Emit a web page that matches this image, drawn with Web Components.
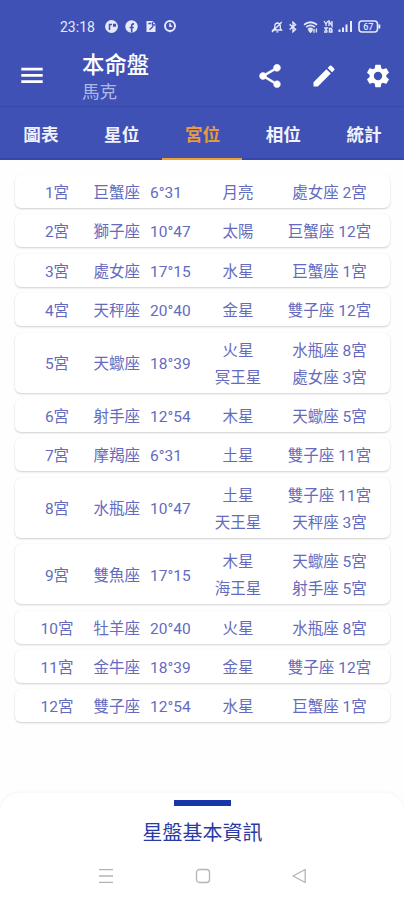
<!DOCTYPE html>
<html lang="zh-Hant">
<head>
<meta charset="utf-8">
<meta name="viewport" content="width=device-width">
<title>本命盤</title>
<style>
  body {
    margin: 0;
    background: #fefefe;
    font-family: Roboto, "Noto Sans CJK TC", sans-serif;
    color: #646bbe;
  }
</style>
</head>
<body>
<chart-screen>
  <status-bar slot="top" time="23:18"></status-bar>
  <app-header slot="top" heading="本命盤" subtitle="馬克"></app-header>
  <tab-bar slot="top">
    <tab-item>圖表</tab-item>
    <tab-item>星位</tab-item>
    <tab-item active>宮位</tab-item>
    <tab-item>相位</tab-item>
    <tab-item>統計</tab-item>
  </tab-bar>
  <house-list></house-list>
  <bottom-sheet slot="bottom">星盤基本資訊</bottom-sheet>
  <nav-bar slot="bottom"></nav-bar>
</chart-screen>

<script>
class BaseElement extends HTMLElement {
  constructor() {
    super();
    this.attachShadow({mode: 'open'});
  }

  connectedCallback() {
    const template = document.createElement('template');
    template.innerHTML = this.render();
    this.shadowRoot.replaceChildren(template.content);
  }
}

class ChartScreen extends BaseElement {
  render() {
    return `
    <style>
      :host {
        display: flex;
        flex-direction: column;
        width: 404px;
        height: 900px;
        overflow: hidden;
      }
      .top { background: #3f51b5; }
      main { flex: 1; min-height: 0; }
    </style>
    <div class="top"><slot name="top"></slot></div>
    <main><slot></slot></main>
    <div><slot name="bottom"></slot></div>`;
  }
}

class StatusBar extends BaseElement {
  render() {
    return `
    <style>
      :host {
        display: flex;
        align-items: center;
        height: 45px;
        padding: 8px 23px 0 60px;
        box-sizing: border-box;
        color: #e6e9fb;
      }
      .time { font-size: 14px; line-height: 16px; width: 45px; }
      svg { display: block; fill: none; stroke: currentColor; }
      .apps { display: flex; gap: 7px; }
      .system { display: flex; align-items: center; gap: 5px; margin-left: auto; }
      text { font: 500 9px Roboto, sans-serif; fill: currentColor; stroke: none; }
    </style>
    <span class="time">${this.getAttribute('time')}</span>
    <div class="apps">
      <svg width="13" height="13" viewBox="0 0 13 13"><circle cx="6.5" cy="6.5" r="6.4" fill="currentColor" stroke="none"/><path d="M4.5 10V4.6H7M8.7 4.6h1.6v1.5H8.7z" stroke="#3f51b5" stroke-width="1.5"/></svg>
      <svg width="13" height="13" viewBox="0 0 13 13"><circle cx="6.5" cy="6.5" r="6.2" fill="currentColor" stroke="none"/><path d="M6.7 12.5V5.7q0-2 2.4-1.8M4.6 7.5h4.2" stroke="#3f51b5" stroke-width="1.6"/></svg>
      <svg width="12" height="13" viewBox="0 0 12 13"><path d="M1.5 1h6l3 3v8h-9z" fill="currentColor" stroke="none"/><path d="M3.3 3.5h3M7.5 2v3h3M4.5 9.8l3.7-3.5" stroke="#3f51b5" stroke-width="1.3"/></svg>
      <svg width="13" height="13" viewBox="0 0 13 13"><circle cx="6" cy="6" r="5" stroke-width="2"/><path d="M4.5 10.5L6 12.8l1.5-2.3z" fill="currentColor" stroke="none"/><path d="M6 3.3v3h2.2" stroke-width="1.6"/></svg>
    </div>
    <div class="system">
      <svg width="12" height="12" viewBox="0 0 12 12" stroke-width="1.3"><path d="M2 9h8.5L9.3 7.4V4.8Q9 2.1 6.5 2 4 2.1 3.8 4.8v2.4zM5.4 10.8h2M1 11L10.8 1"/></svg>
      <svg width="10" height="12" viewBox="0 0 10 12" stroke-width="1.4"><path d="M1.6 3.4l6 4.9L5 10.8V1.2l2.6 2.4-6 4.9"/></svg>
      <svg width="15" height="12" viewBox="0 0 15 12" stroke-width="1.8"><path d="M1 3.7Q7.5-1.2 14 3.7M3.2 6.1q4.3-3.3 8.6 0M5.3 8.3q2.2-1.6 4.3 0"/><path d="M7.5 11l-1.2-1.5h2.4z" fill="currentColor"/><path d="M11 8v3.8M13.4 7.5v4" stroke-width="1.3"/></svg>
      <svg width="10" height="13" viewBox="0 0 10 13" stroke-width="1.3"><path d="M1 1l2 3v2M5 1L3 4M6 6V1l3 5V1M1.2 8h3L2.5 10q2 0 1.3 2H1M9 8.5H6.4V12H9v-2H7.6"/></svg>
      <svg width="15" height="13" viewBox="0 0 15 13" stroke-width="2"><path d="M1.5 12V9.5M5 12V7.5M8.5 12V4.5"/><path d="M13 12V1"/></svg>
      <svg width="23" height="13" viewBox="0 0 23 13"><rect x="1" y="1" width="18.5" height="11" rx="3" stroke-width="1.6"/><path d="M21.3 4.5v4" stroke-width="2"/><text x="5.2" y="9.7">67</text></svg>
    </div>`;
  }
}

class AppHeader extends BaseElement {
  render() {
    return `
    <style>
      :host {
        display: flex;
        align-items: center;
        height: 62px;
        padding: 0 12px 0 20px;
        box-sizing: border-box;
        color: #fff;
        border-bottom: 1px solid #384aa9;
      }
      svg { display: block; fill: currentColor; }
      .titles { flex: 1; margin-left: 38px; }
      h1 { margin: 3px 0 0; font-size: 22.4px; line-height: 30px; font-weight: 500; }
      p { margin: 0; font-size: 17.6px; line-height: 25px; color: #aeb8e8; font-weight: 400; }
      .actions { display: flex; gap: 26px; }
    </style>
    <svg width="24" height="26" viewBox="0 0 24 26"><path d="M1.3 4.7h21.4v2.8H1.3zM1.3 11h21.4v2.8H1.3zM1.3 17.3h21.4v2.8H1.3z"/></svg>
    <div class="titles">
      <h1>${this.getAttribute('heading')}</h1>
      <p>${this.getAttribute('subtitle')}</p>
    </div>
    <div class="actions">
      <svg width="28" height="28" viewBox="0 0 24 24" stroke="currentColor" stroke-width=".4"><path d="M18 16.08c-.76 0-1.44.3-1.96.77L8.91 12.7c.05-.23.09-.46.09-.7s-.04-.47-.09-.7l7.05-4.11c.54.5 1.25.81 2.04.81 1.66 0 3-1.34 3-3s-1.34-3-3-3-3 1.34-3 3c0 .24.04.47.09.7L8.04 9.81C7.5 9.31 6.79 9 6 9c-1.66 0-3 1.34-3 3s1.34 3 3 3c.79 0 1.5-.31 2.04-.81l7.12 4.16c-.05.21-.08.43-.08.65 0 1.61 1.31 2.92 2.92 2.92s2.92-1.31 2.92-2.92-1.31-2.92-2.92-2.92z"/></svg>
      <svg width="28" height="28" viewBox="0 0 24 24"><path d="M3 17.25V21h3.75L17.81 9.94l-3.75-3.75L3 17.25zM20.71 7.04a1 1 0 0 0 0-1.41l-2.34-2.34a1 1 0 0 0-1.41 0l-1.83 1.83 3.75 3.75 1.83-1.83z"/></svg>
      <svg width="28" height="28" viewBox="0 0 24 24"><path d="M19.14 12.94c.04-.3.06-.61.06-.94 0-.32-.02-.64-.07-.94l2.03-1.58a.49.49 0 0 0 .12-.61l-1.92-3.32a.49.49 0 0 0-.59-.22l-2.39.96c-.5-.38-1.03-.7-1.62-.94l-.36-2.54a.48.48 0 0 0-.48-.41h-3.84c-.24 0-.43.17-.47.41l-.36 2.54c-.59.24-1.13.57-1.62.94l-2.39-.96a.48.48 0 0 0-.59.22L2.74 8.87c-.12.21-.08.47.12.61l2.03 1.58c-.05.3-.09.63-.09.94s.02.64.07.94l-2.03 1.58a.49.49 0 0 0-.12.61l1.92 3.32c.12.22.37.29.59.22l2.39-.96c.5.38 1.03.7 1.62.94l.36 2.54c.05.24.24.41.48.41h3.84c.24 0 .44-.17.47-.41l.36-2.54c.59-.24 1.13-.56 1.62-.94l2.39.96c.22.08.47 0 .59-.22l1.92-3.32a.48.48 0 0 0-.12-.61zM12 15.6a3.6 3.6 0 1 1 0-7.2 3.6 3.6 0 0 1 0 7.2z"/></svg>
    </div>`;
  }
}

class TabBar extends BaseElement {
  render() {
    return `
    <style>
      :host {
        display: grid;
        grid-template-columns: repeat(5, 1fr);
        height: 53px;
      }
    </style>
    <slot></slot>`;
  }
}

class TabItem extends BaseElement {
  render() {
    return `
    <style>
      :host {
        display: flex;
        align-items: center;
        justify-content: center;
        box-sizing: border-box;
        padding: 2px 0 0 1px;
        border-bottom: 2px solid #3546ac;
        font-size: 17.6px;
        font-weight: 700;
        color: #eff1fd;
      }
      :host([active]) {
        color: #e69a43;
        border-color: #f0a02e;
      }
    </style>
    <slot></slot>`;
  }
}

class HouseRow extends BaseElement {
  render() {
    return `
    <style>
      :host {
        display: grid;
        grid-template-columns: 56px 8.5px 56.5px 54px 68px 115px;
        align-items: center;
        padding: 5px 3px 1.1px 14px;
        border-radius: 6px;
        background: #fff;
        box-shadow: 0 1px 2px rgba(0, 0, 0, .18), 0 0 1px rgba(0, 0, 0, .05);
        font-size: 15.5px;
        line-height: 27px;
        white-space: nowrap;
      }
      .house, .planets, .rulers { text-align: center; }
      .sign { grid-column: 3; }
      .planets div, .rulers div { height: 27px; }
    </style>
    <span class="house">${this.data.house}宮</span>
    <span class="sign">${this.data.sign}</span>
    <span>${this.data.degree}</span>
    <div class="planets">${this.data.planets.map(p => `<div>${p[0]}</div>`).join('')}</div>
    <div class="rulers">${this.data.planets.map(p => `<div>${p[1]}</div>`).join('')}</div>`;
  }
}

const houses = [
  ['巨蟹座', '6°31', [['月亮', '處女座 2宮']]],
  ['獅子座', '10°47', [['太陽', '巨蟹座 12宮']]],
  ['處女座', '17°15', [['水星', '巨蟹座 1宮']]],
  ['天秤座', '20°40', [['金星', '雙子座 12宮']]],
  ['天蠍座', '18°39', [['火星', '水瓶座 8宮'], ['冥王星', '處女座 3宮']]],
  ['射手座', '12°54', [['木星', '天蠍座 5宮']]],
  ['摩羯座', '6°31', [['土星', '雙子座 11宮']]],
  ['水瓶座', '10°47', [['土星', '雙子座 11宮'], ['天王星', '天秤座 3宮']]],
  ['雙魚座', '17°15', [['木星', '天蠍座 5宮'], ['海王星', '射手座 5宮']]],
  ['牡羊座', '20°40', [['火星', '水瓶座 8宮']]],
  ['金牛座', '18°39', [['金星', '雙子座 12宮']]],
  ['雙子座', '12°54', [['水星', '巨蟹座 1宮']]]
];

class HouseList extends BaseElement {
  render() {
    return `
    <style>
      :host {
        display: flex;
        flex-direction: column;
        gap: 6.3px;
        padding: 15px 14px 0 15px;
      }
    </style>`;
  }

  connectedCallback() {
    super.connectedCallback();
    houses.forEach(([sign, degree, planets], i) => {
      const row = document.createElement('house-row');
      row.data = {house: i + 1, sign, degree, planets};
      this.shadowRoot.appendChild(row);
    });
  }
}

class BottomSheet extends BaseElement {
  render() {
    return `
    <style>
      :host {
        display: flex;
        flex-direction: column;
        align-items: center;
        height: 59px;
        padding: 7px 0 0 1px;
        box-sizing: border-box;
        border-radius: 20px 20px 0 0;
        background: #fff;
        box-shadow: 0 -1px 4px rgba(0, 0, 0, .04);
        font-size: 20px;
        line-height: 28px;
        color: #283aa5;
      }
      .handle { width: 57px; height: 6px; background: #1736a8; margin-bottom: 13px; }
    </style>
    <div class="handle"></div>
    <div><slot></slot></div>`;
  }
}

class NavBar extends BaseElement {
  render() {
    return `
    <style>
      :host {
        display: flex;
        justify-content: space-between;
        align-items: center;
        height: 48px;
        padding: 0 97px 0 98px;
        background: #fff;
      }
      svg { display: block; fill: none; stroke: #b4b4b4; stroke-width: 1.3; }
    </style>
    <svg width="16" height="16" viewBox="0 0 16 16"><path d="M1 1.7h14M1 8h14M1 14.3h14"/></svg>
    <svg width="16" height="16" viewBox="0 0 16 16"><rect x="1.5" y="1.5" width="13" height="13" rx="3"/></svg>
    <svg width="16" height="16" viewBox="0 0 16 16"><path d="M2 8L14.2 1.5v13z" stroke-linejoin="round"/></svg>`;
  }
}

customElements.define('chart-screen', ChartScreen);
customElements.define('status-bar', StatusBar);
customElements.define('app-header', AppHeader);
customElements.define('tab-bar', TabBar);
customElements.define('tab-item', TabItem);
customElements.define('house-row', HouseRow);
customElements.define('house-list', HouseList);
customElements.define('bottom-sheet', BottomSheet);
customElements.define('nav-bar', NavBar);
</script>
</body>
</html>
